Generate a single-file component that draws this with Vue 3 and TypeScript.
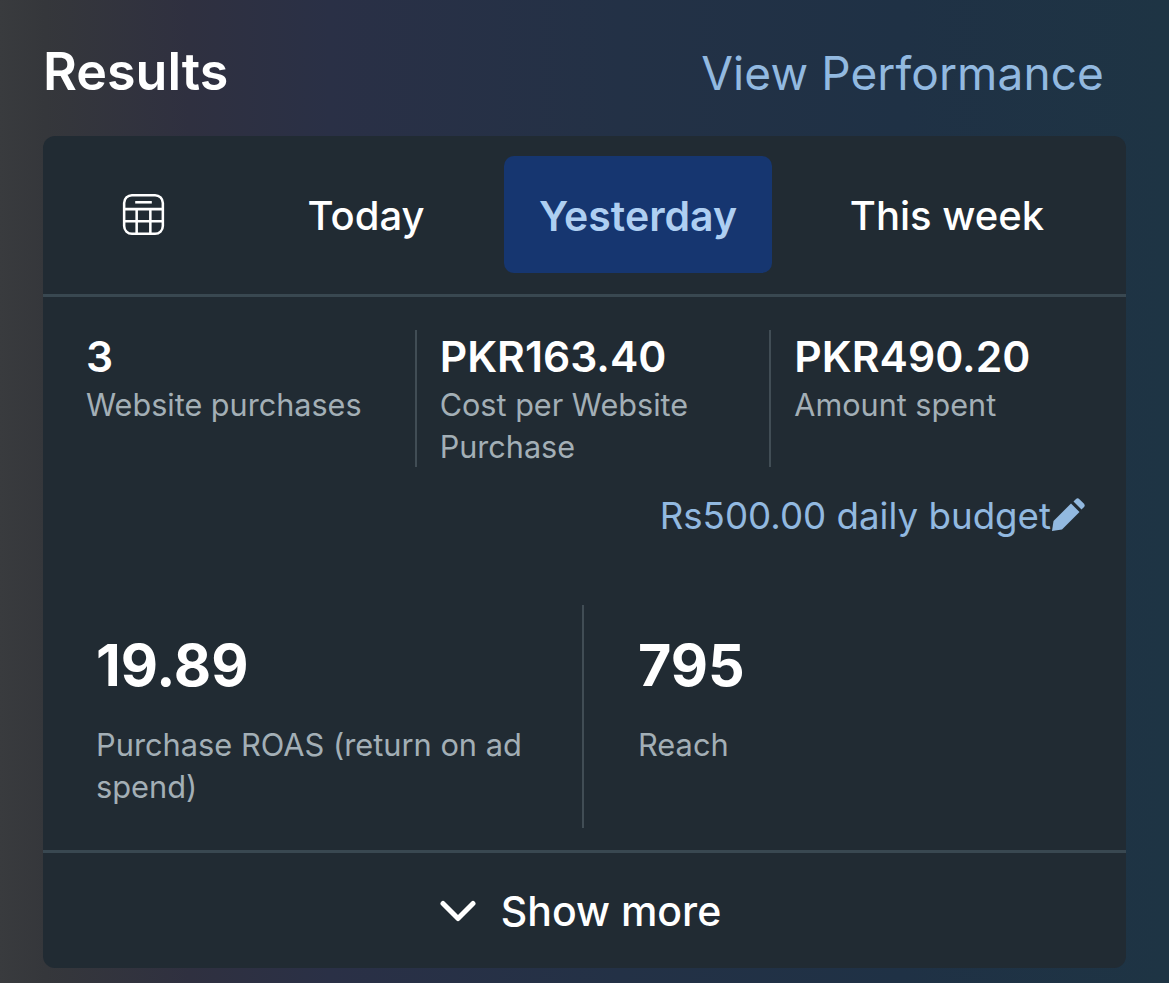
<script setup lang="ts">
interface Stat { value: string; label: string }
const tabs: string[] = ['Today', 'Yesterday', 'This week']
const stats: Stat[] = [
  { value: '3', label: 'Website purchases' },
  { value: 'PKR163.40', label: 'Cost per Website Purchase' },
  { value: 'PKR490.20', label: 'Amount spent' },
]
const metrics: Stat[] = [
  { value: '19.89', label: 'Purchase ROAS (return on ad spend)' },
  { value: '795', label: 'Reach' },
]
</script>

<template>
  <div class="page">
    <header class="head">
      <h1 class="title">Results</h1>
      <a class="view">View Performance</a>
    </header>
    <section class="card">
      <div class="tabs">
        <div class="tab-icon">
          <svg width="43" height="43" viewBox="0 0 44 44" fill="none" stroke="#fff" stroke-width="2.6">
            <rect x="2.2" y="2.2" width="39.6" height="39.6" rx="8" />
            <path d="M2.2 16.5H41.8M2.2 28.8H41.8M15 16.5V41.8M29 16.5V41.8" />
            <path d="M13.5 9.5H30.5" stroke-width="2.6" />
          </svg>
        </div>
        <button v-for="(t, i) in tabs" :key="t" class="tab" :class="['tab-' + i, { active: i === 1 }]">{{ t }}</button>
      </div>
      <div class="stats">
        <div v-for="s in stats" :key="s.value" class="stat">
          <div class="stat-value">{{ s.value }}</div>
          <div class="stat-label">{{ s.label }}</div>
        </div>
      </div>
      <div class="budget">
        <span>Rs500.00 daily budget</span>
        <svg class="pencil" width="34" height="34" viewBox="0 0 34 34" fill="#92b9e0">
          <path d="M1 33 L2.5 23 L20 5.5 L28.5 14 L11 31.5 Z" />
          <path d="M22.5 3.5 L24.8 1.2 a2.6 2.6 0 0 1 3.6 0 L32.8 5.6 a2.6 2.6 0 0 1 0 3.6 L30.5 11.5 Z" />
        </svg>
      </div>
      <div class="metrics">
        <div v-for="m in metrics" :key="m.value" class="metric">
          <div class="metric-value">{{ m.value }}</div>
          <div class="metric-label">{{ m.label }}</div>
        </div>
      </div>
      <div class="more">
        <svg width="36" height="24" viewBox="0 0 36 24" fill="none" stroke="#fff" stroke-width="5" stroke-linecap="round" stroke-linejoin="round">
          <path d="M3 4.5 L18 19.5 L33 4.5" />
        </svg>
        <span>Show more</span>
      </div>
    </section>
  </div>
</template>

<style>
html, body { margin: 0; background: #1f3044; }
</style>

<style scoped>
.page {
  box-sizing: border-box;
  width: 1169px;
  height: 983px;
  overflow: hidden;
  padding: 0 43px;
  font-family: Inter, "Noto Sans", "Liberation Sans", sans-serif;
  background: linear-gradient(90deg, #393b3e 0, #35373b 45px, #2f3040 190px, #2a3046 330px, #233146 620px, #1f3145 900px, #1e3444 1169px);
}
.head {
  height: 136px;
  display: flex;
  align-items: center;
  justify-content: space-between;
  padding: 9px 22px 0 0;
  box-sizing: border-box;
}
.title {
  margin: 0 0 3px;
  font-size: 52px;
  font-weight: 600;
  color: #fff;
}
.view {
  font-size: 46px;
  font-weight: 400;
  color: #92b9e0;
  letter-spacing: 0.1px;
}
.card {
  height: 832px;
  box-sizing: border-box;
  border-radius: 12px;
  background: #212b33;
  display: flex;
  flex-direction: column;
}
.tabs {
  height: 161px;
  box-sizing: border-box;
  border-bottom: 3px solid #394851;
  display: flex;
  padding: 20px 0 21px;
  position: relative;
}
.tab-icon {
  width: 201px;
  display: flex;
  align-items: center;
  justify-content: center;
}
.tab {
  border: 0;
  background: none;
  padding: 2px 0 0;
  font: inherit;
  font-size: 40px;
  font-weight: 500;
  color: #fff;
  border-radius: 10px;
}
.tab-0 { width: 244px; margin-right: 16px; }
.tab-1 { width: 268px; font-size: 41px; }
.tab-2 { width: 350px; }
.active {
  background: #163670;
  color: #aecff2;
  font-weight: 600;
}
.stats {
  display: flex;
  height: 137px;
  margin-top: 33px;
  padding-left: 19px;
}
.stat {
  width: 355px;
  box-sizing: border-box;
  padding-left: 23px;
  padding-right: 30px;
  border-right: 2px solid #414d55;
}
.stat:first-child { padding-left: 24px; }
.stat:last-child { border-right: 0; padding-right: 0; }
.stat-value {
  font-size: 42.6px;
  line-height: 54px;
  font-weight: 600;
  color: #fff;
}
.stat-label {
  font-size: 30.6px;
  line-height: 42px;
  color: #a3afb6;
}
.budget {
  display: flex;
  justify-content: flex-end;
  align-items: center;
  height: 50px;
  margin-top: 23px;
  margin-bottom: 2px;
  padding-right: 41px;
  font-size: 36.7px;
  color: #92b9e0;
}
.metrics {
  display: flex;
  height: 223px;
  margin-top: 63px;
}
.metric {
  box-sizing: border-box;
  padding-left: 53px;
  width: 541px;
  padding-right: 40px;
  border-right: 2px solid #414d55;
}
.metric:last-child { border-right: 0; padding-left: 54px; }
.metric-value {
  font-size: 57.4px;
  line-height: 70px;
  margin-top: 25px;
  font-weight: 700;
  color: #fff;
}
.metric-label {
  font-size: 30.8px;
  line-height: 42px;
  margin-top: 24px;
  color: #a3afb6;
}
.more {
  margin-top: 22px;
  flex: 1;
  border-top: 3px solid #394851;
  display: flex;
  align-items: center;
  justify-content: center;
  gap: 25px;
  font-size: 41px;
  font-weight: 500;
  color: #fff;
  padding: 1px 8px 0 0;
}
</style>
